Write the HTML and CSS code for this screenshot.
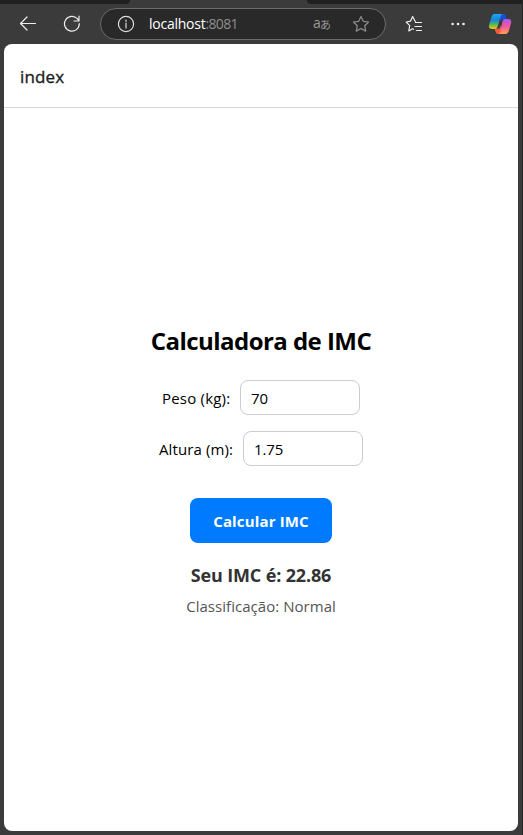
FILE: index.html
```html
<!DOCTYPE html>
<html lang="pt-BR">
<head>
<meta charset="utf-8">
<title>index</title>
<link rel="stylesheet" href="styles.css">
</head>
<body>
<div class="browser">
  <div class="tabs"><div class="tab-left"></div><div class="tab-right"></div></div>
  <nav class="toolbar">
    <svg class="icon back" width="18" height="18" viewBox="0 0 18 18"><path d="M16.500 8.500H2M8 2L1.500 8.500l6.500 6.500"/></svg>
    <svg class="icon reload" width="18" height="18" viewBox="0 0 18 18"><path d="M16.3 8.7A7.4 7.4 0 1 1 14.3 3.7L15.8 5.5M16 1v5h-5"/></svg>
    <div class="address">
      <svg class="icon info" width="18" height="18" viewBox="0 0 18 18"><circle cx="9" cy="9" r="7.6"/><path d="M9 8v5M9 5v1.3"/></svg>
      <div class="url"><span class="host">localhost</span><span class="port">:8081</span></div>
      <div class="translate"><span class="latin">a</span><span class="kana">あ</span></div>
      <svg class="icon star" width="18" height="18" viewBox="0 0 18 18"><path d="M9 1.4l2.3 4.9 5.3.7-3.9 3.7 1 5.4L9 13.5l-4.7 2.600 1-5.400L1.400 7l5.300-.7z"/></svg>
    </div>
    <svg class="icon favorites" width="18" height="18" viewBox="0 0 18 18"><path d="M10.300 6.500L7.600 1.500 5.600 6.100 1.200 7l3.500 3.700-.9 5.200 3.600-2.100 1.200.5M10.500 7.500H16.500M10 11.500h6.500M11.500 15.500H16.500"/></svg>
    <svg class="icon more" width="18" height="18" viewBox="0 0 18 18"><circle cx="3.600" cy="9" r="1.300"/><circle cx="9" cy="9" r="1.300"/><circle cx="14.500" cy="9" r="1.300"/></svg>
    <svg class="copilot" width="24" height="22" viewBox="0 0 24 22">
      <defs>
        <linearGradient id="cool" x1="0" y1="0" x2="0" y2="1"><stop offset="0" stop-color="#18a9f5"/><stop offset=".4" stop-color="#1685d7"/><stop offset=".7" stop-color="#59b75f"/><stop offset="1" stop-color="#f3cc0b"/></linearGradient>
        <linearGradient id="warm" x1="0" y1="0" x2="0" y2="1"><stop offset="0" stop-color="#aa54ef"/><stop offset=".5" stop-color="#f1589b"/><stop offset="1" stop-color="#ffa052"/></linearGradient>
      </defs>
      <path fill="#194fd2" d="M12 1h3.5c1.5 0 2 .8 2.5 2.4L19 6.500h-3.5c-2 0-3 1-3.500 3z"/>
      <path fill="#f35b43" d="M6.500 15.500h5L13 12l1 5-2 4h-2c-1.500 0-2.100-.8-2.500-2.400z"/>
      <path fill="url(#cool)" d="M6.600 1H15c-1.400 0-2 1-2.500 2.600L10 12.500C9.300 14.800 8.500 16 6.500 16H4c-3 0-3.500-2-2.700-4.700l2-6.800C4 2.200 4.600 1 6.600 1z"/>
      <path fill="url(#warm)" d="M17.500 6h2.700c3 0 3.500 2 2.700 4.700l-2 6.800c-.7 2.300-1.500 3.500-3.500 3.500H10c1.400 0 2-1 2.500-2.600L14.300 9c.7-2.100 1.300-3 3.200-3z"/>
    </svg>
  </nav>
  <div class="page">
    <header class="header">index</header>
    <main class="content">
      <h1 class="title">Calculadora de IMC</h1>
      <div class="field weight"><label for="peso">Peso (kg):</label><input id="peso" value="70"></div>
      <div class="field height"><label for="altura">Altura (m):</label><input id="altura" value="1.75"></div>
      <button class="calculate">Calcular IMC</button>
      <p class="result">Seu IMC é: 22.86</p>
      <p class="category">Classificação: Normal</p>
    </main>
  </div>
</div>
</body>
</html>
```
FILE: styles.css
```css
* { box-sizing: border-box; }
body { margin: 0; background: #3b3b3b; font-family: "Open Sans", "Noto Sans", sans-serif; }
.browser { height: 835px; border-right: 1px solid #252525; overflow: hidden; }
.tabs { height: 4px; display: flex; justify-content: space-between; }
.tab-left { width: 130px; background: #202020; border-bottom-right-radius: 4px; }
.tab-right { width: 215px; background: #202020; border-bottom-left-radius: 4px; }
.toolbar { height: 40px; display: flex; align-items: center; }
.icon { flex: none; fill: none; stroke: #eee; stroke-width: 1.2; stroke-linecap: round; stroke-linejoin: round; }
.back { margin-left: 19px; }
.reload { margin-left: 26px; }
.address { width: 286px; height: 32px; margin-left: 19px; flex: none; display: flex; align-items: center; border: 1px solid #6b6b6b; border-radius: 16px; background: #292929; }
.info { margin-left: 16px; stroke: #ddd; }
.url { width: 164px; margin-left: 14px; font-size: 14px; line-height: 20px; letter-spacing: -.25px; white-space: nowrap; }
.host { color: #fff; }
.port { color: #8f8f8f; letter-spacing: -.65px; }
.translate { width: 19px; height: 20px; display: flex; align-items: center; color: #999; }
.latin { width: 7px; font-size: 14px; line-height: 18px; margin-top: -2px; }
.kana { font: 11px/20px "Noto Sans CJK JP", sans-serif; }
.star { margin-left: 20px; stroke: #8d8d8d; }
.favorites { margin-left: 19px; }
.more { margin-left: 26px; fill: #eee; stroke: none; }
.copilot { flex: none; margin-left: 21px; }
.page { height: 787px; margin-left: 4px; margin-right: 4px; background: #fff; border-radius: 8px; overflow: hidden; }
.header { height: 64px; padding: 1px 0 0 16px; border-bottom: 1px solid #d8d8d8; display: flex; align-items: center; color: #1c1c1e; font-size: 17px; letter-spacing: .15px; -webkit-text-stroke: .35px #1c1c1e; }
.content { height: 723px; display: flex; flex-direction: column; align-items: center; padding-top: 217px; }
.title { height: 32px; margin: 0 0 23px; font-size: 24px; line-height: 32px; font-weight: 700; letter-spacing: -.55px; white-space: nowrap; color: #000; }
.field { height: 35px; display: flex; align-items: center; gap: 10px; margin-bottom: 16px; }
.field label { font-size: 15px; letter-spacing: .2px; white-space: nowrap; }
.weight label { width: 68px; }
.height label { width: 74px; letter-spacing: .1px; }
.field input { width: 120px; height: 35px; padding: 0 10px; border: 1px solid #ccc; border-radius: 8px; background: #fff; color: #000; font: 15px "Open Sans", sans-serif; letter-spacing: -.1px; }
.calculate { width: 142px; height: 45px; margin-top: 16px; padding: 0; border: 0; border-radius: 8px; background: #007bff; color: #fff; font: 700 15px/20px "Open Sans", sans-serif; letter-spacing: .15px; }
.result { height: 24px; margin: 20px 0 0; font-size: 18px; line-height: 24px; font-weight: 700; letter-spacing: -.15px; color: #333; white-space: nowrap; }
.category { height: 22px; margin: 8px 0 0; font-size: 15px; line-height: 22px; letter-spacing: .04px; color: #555; white-space: nowrap; }
```
